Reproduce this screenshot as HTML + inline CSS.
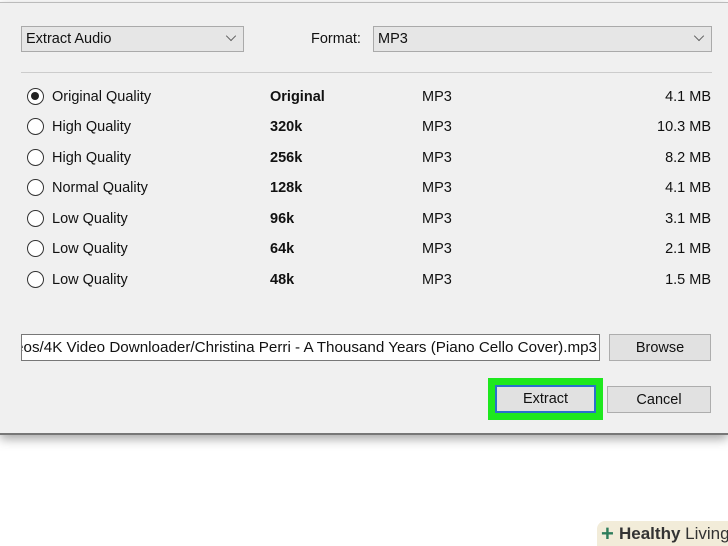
<!DOCTYPE html>
<html><head><style>
*{margin:0;padding:0;box-sizing:border-box}
body{width:728px;height:546px;background:#fff;position:relative;overflow:hidden;font-family:"Liberation Sans",sans-serif;font-size:14.5px;color:#111}
.dlg{position:absolute;left:0;top:2px;width:728px;height:433px;background:#f0f0f0;border-top:1px solid #bbb;border-bottom:2px solid #777;box-shadow:0 4px 10px rgba(0,0,0,.35)}
.a{position:absolute;white-space:nowrap}
.dd{position:absolute;background:#e6e6e6;border:1px solid #aaa;height:26px;line-height:24px;padding-left:4px}
.chev{position:absolute;right:8px;width:8px;height:8px;border-right:1px solid #555;border-bottom:1px solid #555;transform:rotate(45deg) scale(.9);top:5px}
.r{position:absolute;left:27px;width:17px;height:17px;border:1.5px solid #333;border-radius:50%;background:#fff}
.r.on::after{content:"";position:absolute;left:3px;top:3px;width:8px;height:8px;border-radius:50%;background:#222}
.row{position:absolute;left:0;width:728px;height:20px;line-height:20px}
.b{font-weight:bold}
.btn{position:absolute;background:#e1e1e1;border:1px solid #adadad;text-align:center;line-height:27px}
</style></head><body>
<div class="dlg">
<div class="dd" style="left:21px;top:23px;width:223px">Extract Audio<span class="chev"></span></div>
<div class="a" style="left:311px;top:26px;line-height:20px">Format:</div>
<div class="dd" style="left:373px;top:23px;width:339px">MP3<span class="chev"></span></div>
<div class="a" style="left:21px;top:69px;width:691px;height:1px;background:#ccc"></div>
</div>
<div class="row" style="top:87px"><span class="r on" style="top:1px"></span><span class="a" style="left:52px">Original Quality</span><span class="a b" style="left:270px">Original</span><span class="a" style="left:422px">MP3</span><span class="a" style="right:17px">4.1 MB</span></div>
<div class="row" style="top:117px"><span class="r" style="top:1px"></span><span class="a" style="left:52px">High Quality</span><span class="a b" style="left:270px">320k</span><span class="a" style="left:422px">MP3</span><span class="a" style="right:17px">10.3 MB</span></div>
<div class="row" style="top:148px"><span class="r" style="top:1px"></span><span class="a" style="left:52px">High Quality</span><span class="a b" style="left:270px">256k</span><span class="a" style="left:422px">MP3</span><span class="a" style="right:17px">8.2 MB</span></div>
<div class="row" style="top:178px"><span class="r" style="top:1px"></span><span class="a" style="left:52px">Normal Quality</span><span class="a b" style="left:270px">128k</span><span class="a" style="left:422px">MP3</span><span class="a" style="right:17px">4.1 MB</span></div>
<div class="row" style="top:209px"><span class="r" style="top:1px"></span><span class="a" style="left:52px">Low Quality</span><span class="a b" style="left:270px">96k</span><span class="a" style="left:422px">MP3</span><span class="a" style="right:17px">3.1 MB</span></div>
<div class="row" style="top:239px"><span class="r" style="top:1px"></span><span class="a" style="left:52px">Low Quality</span><span class="a b" style="left:270px">64k</span><span class="a" style="left:422px">MP3</span><span class="a" style="right:17px">2.1 MB</span></div>
<div class="row" style="top:270px"><span class="r" style="top:1px"></span><span class="a" style="left:52px">Low Quality</span><span class="a b" style="left:270px">48k</span><span class="a" style="left:422px">MP3</span><span class="a" style="right:17px">1.5 MB</span></div>
<div class="a" style="left:21px;top:334px;width:579px;height:27px;background:#fff;border:1px solid #777;overflow:hidden;line-height:26px;direction:rtl;padding-right:2px;font-size:15.2px"><span style="direction:ltr;unicode-bidi:embed">Videos/4K Video Downloader/Christina Perri - A Thousand Years (Piano Cello Cover).mp3</span></div>
<div class="btn" style="left:609px;top:334px;width:102px;height:27px">Browse</div>
<div class="a" style="left:488px;top:378px;width:115px;height:42px;background:#1ee81e"></div>
<div class="btn" style="left:495px;top:385px;width:101px;height:28px;border:2px solid #2a70cc;line-height:25px">Extract</div>
<div class="btn" style="left:607px;top:386px;width:104px;height:27px">Cancel</div>
<div class="a" style="left:597px;top:521px;width:131px;height:25px;background:#f2ecd9;border-radius:8px 0 0 0;font-size:17px;line-height:25px;padding-left:22px;color:#333"><span style="position:absolute;left:4px;top:3px;color:#2e7d5b;font-weight:bold;font-size:22px;line-height:20px">+</span><b>Healthy</b> Living</div>
</body></html>
